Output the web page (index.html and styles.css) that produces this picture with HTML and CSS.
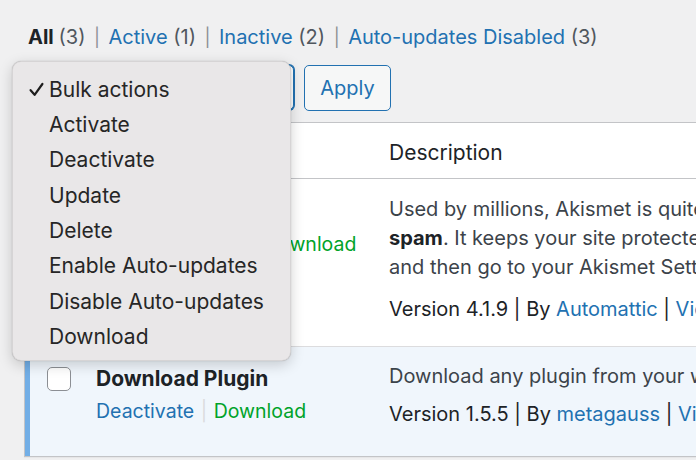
FILE: index.html
```html
<!DOCTYPE html>
<html>
<head>
<meta charset="utf-8">
<link rel="stylesheet" href="styles.css">
</head>
<body>
<div class="wrap">
  <ul class="subsubsub">
    <li class="current">All <span class="count">(3)</span></li>
    <li class="sep">|</li>
    <li><a>Active</a> <span class="count">(1)</span></li>
    <li class="sep">|</li>
    <li><a>Inactive</a> <span class="count">(2)</span></li>
    <li class="sep">|</li>
    <li><a>Auto-updates Disabled</a> <span class="count">(3)</span></li>
  </ul>
  <div class="tablenav">
    <div class="select">Bulk actions</div>
    <button class="apply">Apply</button>
  </div>
  <div class="table">
    <div class="row head">
      <div class="cell check"><span class="cb"></span></div>
      <div class="cell name">Plugin</div>
      <div class="cell desc">Description</div>
    </div>
    <div class="row">
      <div class="cell check"><span class="cb"></span></div>
      <div class="cell name">
        <div class="title short">Akismet Anti-Spam</div>
        <div class="actions"><a class="small">Activate</a><span class="bar">|</span><a class="del small">Delete</a><span class="bar">|</span><a class="green">Download</a></div>
      </div>
      <div class="cell desc">
        <p class="text">Used by millions, Akismet is quite possibly the best way in the world to <b>protect your blog from</b><br><b>spam</b>. It keeps your site protected even while you sleep. To get started: activate the Akismet plugin<br>and then go to your Akismet Settings page to set up your API key.</p>
        <p class="meta">Version 4.1.9 | By <a>Automattic</a> | <a>View details</a></p>
      </div>
    </div>
    <div class="row active">
      <div class="cell check"><span class="cb"></span></div>
      <div class="cell name">
        <div class="title">Download Plugin</div>
        <div class="actions"><a>Deactivate</a><span class="bar">|</span><a class="green">Download</a></div>
      </div>
      <div class="cell desc">
        <p class="text">Download any plugin from your wordpress admin panel's Plugins page by just one click!</p>
        <p class="meta">Version 1.5.5 | By <a>metagauss</a> | <a>View details</a></p>
      </div>
    </div>
  </div>
</div>

<div class="menu">
  <div class="item checked"><svg class="tick" width="15" height="15" viewBox="0 0 15 15"><path d="M1.6 8.2 L5.6 12.8 L13.4 2" fill="none" stroke="#1e1e1e" stroke-width="2.2" stroke-linecap="round" stroke-linejoin="round"/></svg>Bulk actions</div>
  <div class="item">Activate</div>
  <div class="item">Deactivate</div>
  <div class="item">Update</div>
  <div class="item">Delete</div>
  <div class="item">Enable Auto-updates</div>
  <div class="item">Disable Auto-updates</div>
  <div class="item">Download</div>
</div>
</body>
</html>
```

FILE: styles.css
```css
html, body {
  margin: 0;
  padding: 0;
  background: #f0f0f1;
  overflow: hidden;
  width: 696px;
  height: 460px;
}
body {
  font-family: Inter, "Noto Sans", sans-serif;
  font-size: 20px;
  color: #3c434a;
  position: relative;
}
a { color: #2271b1; text-decoration: none; }

.wrap {
  padding: 23px 0 0 24px;
}

.subsubsub {
  list-style: none;
  margin: 0 0 0 4px;
  padding: 0;
  display: flex;
  align-items: center;
  height: 29px;
  line-height: 29px;
  white-space: nowrap;
}
.subsubsub li { color: #50575e; }
.subsubsub .current { color: #1d2327; font-weight: 700; }
.subsubsub .current .count { font-weight: 400; color: #50575e; }
.subsubsub .sep { color: #8c8f94; padding: 0 8.5px; font-size: 18px; }

.tablenav {
  display: flex;
  align-items: center;
  gap: 10px;
  margin-top: 12px;
  height: 47px;
}
.select {
  width: 266px;
  height: 45px;
  box-sizing: border-box;
  border: 1px solid #2271b1;
  box-shadow: 0 0 0 1px #2271b1;
  border-radius: 5px;
  background: #fff;
  margin-left: 4px;
  padding-left: 12px;
  line-height: 43px;
}
.apply {
  font-family: inherit;
  font-size: 20px;
  color: #2271b1;
  background: #f6f7f7;
  border: 1px solid #2271b1;
  border-radius: 5px;
  height: 46px;
  width: 87px;
  padding: 0;
  margin-left: 0;
}

.table {
  margin-top: 11px;
  width: 900px;
  background: #fff;
  border: 1px solid #c3c4c7;
  box-shadow: 0 1px 1px rgba(0,0,0,0.04);
}
.row {
  display: flex;
  border-top: 1px solid #dcdcde;
}
.row.head {
  border-top: none;
  border-bottom: 1px solid #c3c4c7;
  height: 55px;
  align-items: center;
}
.row.head + .row { border-top: none; }
.row.active {
  background: #f0f6fc;
  box-shadow: inset 5px 0 0 #72aee6;
}
.cell { box-sizing: border-box; }
.check {
  width: 57px;
  padding-left: 22px;
  flex: none;
}
.name {
  width: 292px;
  flex: none;
  padding-left: 14px;
}
.desc {
  flex: 1;
  padding-left: 15px;
  padding-right: 10px;
  white-space: nowrap;
}
.head .desc { color: #1d2327; padding-top: 4px; font-size: 21px; }
.head .name { color: #1d2327; font-weight: 600; font-size: 21px; }

.cb {
  display: block;
  width: 24px;
  height: 24px;
  box-sizing: border-box;
  border: 1px solid #8c8f94;
  border-radius: 5px;
  background: #fff;
}
.row:not(.head) .check { padding-top: 20px; }

.title {
  font-weight: 700;
  font-size: 21px;
  color: #1d2327;
  line-height: 29px;
  margin-top: 17px;
  white-space: nowrap;
}
.title.short { font-size: 19px; margin-top: 18px; }
.actions {
  line-height: 29px;
  margin-top: 4px;
  white-space: nowrap;
  font-size: 19.5px;
}
.actions .small { font-size: 18.75px; }
.actions .bar { color: #dcdcde; padding: 0 6.5px; }
.actions .green { color: #00a32a; }
.actions .del { color: #b32d2e; }

.text {
  margin: 16px 0 0;
  line-height: 29px;
  color: #3c434a;
}
.text b { color: #1d2327; }
.meta {
  margin: 13px 0 22px;
  line-height: 29px;
  color: #1d2327;
}
.active .text { margin-top: 15px; }
.active .meta { margin-top: 9px; margin-bottom: 27px; }

.menu {
  position: absolute;
  left: 12px;
  top: 61px;
  width: 279px;
  height: 300px;
  box-sizing: border-box;
  padding: 9.5px 0 8px;
  background: #e9e7e8;
  border-radius: 9px;
  border: 1px solid rgba(0,0,0,0.08);
  box-shadow: 0 4px 14px rgba(0,0,0,0.18), 0 0 1px rgba(0,0,0,0.3);
  color: #262626;
  font-size: 21px;
}
.item {
  height: 35.4px;
  line-height: 35.4px;
  padding-left: 36px;
  position: relative;
  white-space: nowrap;
}
.tick {
  position: absolute;
  left: 16px;
  top: 10px;
}
```
